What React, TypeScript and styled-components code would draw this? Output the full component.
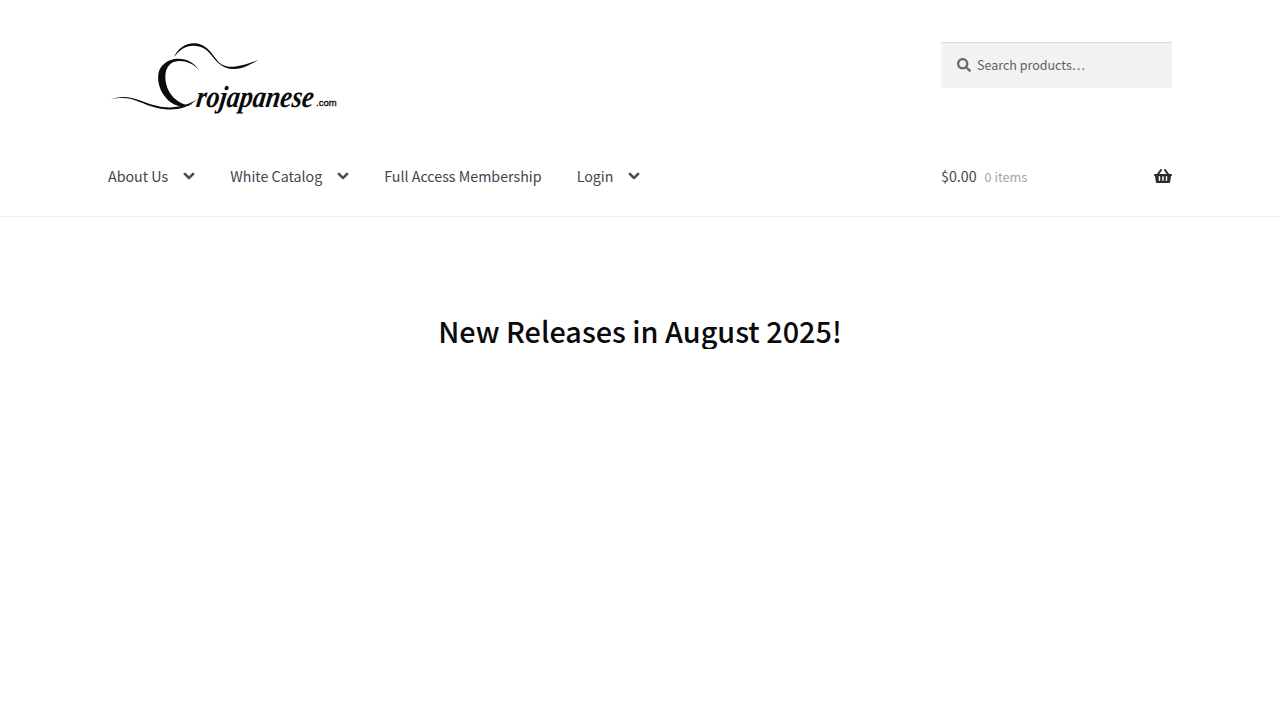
import React from "react";
import styled, { createGlobalStyle } from "styled-components";
import { FaChevronDown, FaSearch, FaShoppingBasket } from "react-icons/fa";

//////////////////////// STYLED-COMPONENTS ////////////////////////

const GlobalStyle = createGlobalStyle`
  html, body {
    margin: 0;
    padding: 0;
    background: #ffffff;
  }
  body {
    font-family: "Noto Sans CJK JP", "Noto Sans", sans-serif;
    color: #43454b;
  }
`;

const Masthead = styled.header`
  height: 216px;
  border-bottom: 1px solid #efefef;
  box-sizing: content-box;
`;

const Wrap = styled.div`
  width: 1064px;
  margin: 0 auto;
`;

const TopRow = styled.div`
  display: flex;
  justify-content: space-between;
  align-items: flex-start;
  height: 134px;
  padding-top: 40px;
  box-sizing: border-box;
`;

const LogoSvg = styled.svg`
  display: block;
  width: 230px;
  height: 78px;
`;

const SearchBox = styled.div`
  display: flex;
  align-items: center;
  gap: 6px;
  width: 231px;
  height: 46px;
  margin-top: 2px;
  padding: 0 0 1px 16px;
  box-sizing: border-box;
  background: #f2f2f2;
  border-top: 1px solid #d8d8d8;
  color: #5f6062;
  font-size: 12.5px;
  line-height: 1;
`;

const NavRow = styled.div`
  display: flex;
  justify-content: space-between;
  align-items: center;
  height: 84px;
`;

const Menu = styled.nav`
  display: flex;
  gap: 35px;
`;

const MenuItem = styled.a`
  display: flex;
  align-items: center;
  gap: 15px;
  font-size: 14.25px;
  line-height: 24px;
  color: #43454b;
`;

const Caret = styled(FaChevronDown)`
  stroke: currentColor;
  stroke-width: 36px;
`;

const Cart = styled.div`
  display: flex;
  align-items: center;
  width: 231px;
  font-size: 14.25px;
  line-height: 24px;
  color: #43454b;
`;

const CartCount = styled.span`
  margin: 1px 0 0 8px;
  font-size: 12.7px;
  color: #a5a5a7;
  flex: 1;
`;

const Main = styled.main`
  padding-top: 96px;
`;

const Title = styled.h1`
  margin: 0;
  text-align: center;
  font-size: 28.8px;
  line-height: 36px;
  font-weight: 500;
  color: #0a0a0c;
`;

//////////////////////// DATA ////////////////////////

const MENU = [
  { label: `About Us`, sub: true },
  { label: `White Catalog`, sub: true },
  { label: `Full Access Membership`, sub: false },
  { label: `Login`, sub: true },
];

//////////////////////// COMPONENT ////////////////////////

const Logo = () => (
  <LogoSvg viewBox="24 30 690 234" aria-label="Crojapanese.com">
    <path
      d="M222 82C232 58 254 40 282 40C312 40 330 62 346 84C360 104 376 112 402 110C428 108 450 98 475 90C452 102 430 118 400 117C370 116 354 100 338 80C322 58 304 47 280 47C256 47 238 60 222 82Z"
      fill="#0b0b0b"
    />
    <path
      d="M298 122C284 102 258 92 236 93C210 94 196 114 196 140C196 172 212 202 242 218C252 224 264 226 278 222C252 236 220 228 200 206C180 184 172 158 175 132C178 106 204 86 234 86C262 86 286 100 298 122Z"
      fill="#0b0b0b"
    />
    <path
      d="M30 208C50 201 72 198 96 204C130 213 160 229 196 232C232 234 262 226 292 208C264 234 232 241 196 238C158 235 128 218 94 207C72 202 52 204 30 208Z"
      fill="#0b0b0b"
    />
    <text
      transform="translate(286 230) skewX(-8) scale(0.85 1)"
      fontFamily="Liberation Serif, serif"
      fontStyle="italic"
      fontWeight="700"
      fontSize="92"
      fill="#0b0b0b"
    >
      rojapanese
    </text>
    <text
      x="648"
      y="227"
      fontFamily="Liberation Sans, sans-serif"
      fontSize="28.6"
      fill="#000000"
      stroke="#000000"
      strokeWidth="0.8"
    >
      .com
    </text>
  </LogoSvg>
);

const App = () => {
  // RETURN //
  return (
    <>
      <GlobalStyle />
      <Masthead>
        <Wrap>
          <TopRow>
            <Logo />
            <SearchBox>
              <FaSearch size={14} color="#6a6a6a" />
              <span>Search products…</span>
            </SearchBox>
          </TopRow>
          <NavRow>
            <Menu>
              {MENU.map((item) => (
                <MenuItem key={item.label}>
                  {item.label}
                  {item.sub && <Caret size={12} />}
                </MenuItem>
              ))}
            </Menu>
            <Cart>
              $0.00
              <CartCount>0 items</CartCount>
              <FaShoppingBasket size={18} color="#2c2d33" />
            </Cart>
          </NavRow>
        </Wrap>
      </Masthead>
      <Main>
        <Title>New Releases in August 2025!</Title>
      </Main>
    </>
  );
};

//////////////////////// EXPORT ////////////////////////

export default App;
